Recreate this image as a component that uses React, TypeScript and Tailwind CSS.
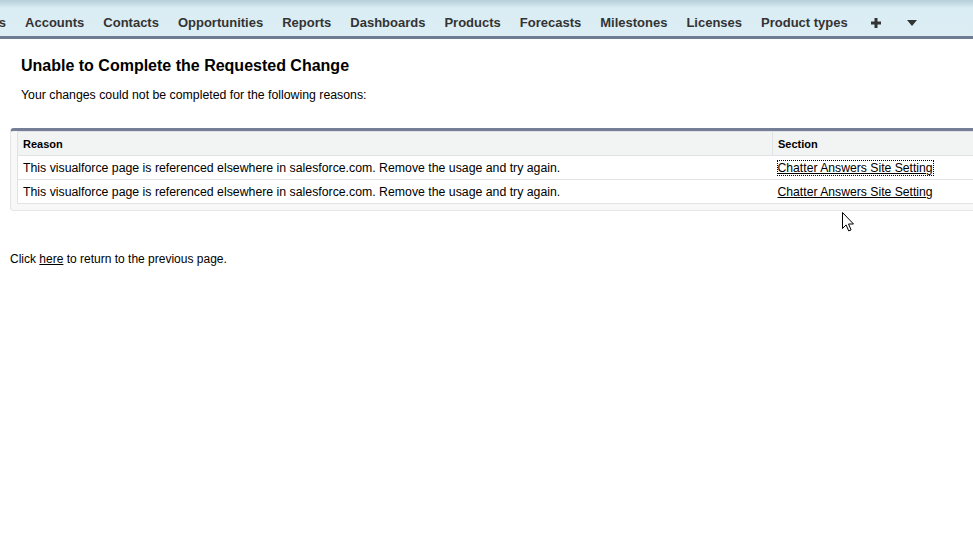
import React from 'react'

const TABS = ['Leads', 'Accounts', 'Contacts', 'Opportunities', 'Reports', 'Dashboards', 'Products', 'Forecasts', 'Milestones', 'Licenses', 'Product types']

const REASON = 'This visualforce page is referenced elsewhere in salesforce.com. Remove the usage and try again.'

export default function App() {
  return (
    <div className="relative min-h-[533px] overflow-hidden bg-white font-['Arial','Liberation_Sans',sans-serif] text-black">

      {/* Tab bar */}
      <div className="h-[39px] border-b-[3px] border-[#6d7b93] bg-[linear-gradient(to_bottom,#b6cfd8_0px,#c9e0e8_5px,#dbedf4_8px,#dcedf4_100%)]">
        <div className="flex h-full items-start pt-[15px] text-[13px] leading-4 font-bold text-[#333]">
          {TABS.map((t, i) => (
            <span key={t} className={i === 0 ? '-ml-[41px] px-[9.5px] whitespace-nowrap' : 'px-[9.5px] whitespace-nowrap'}>{t}</span>
          ))}
          <span className="ml-[14px] flex h-4 items-center">
            <svg width="10" height="10" viewBox="0 0 10 10">
              <path d="M5 0v10M0 5h10" stroke="#333" strokeWidth="3" />
            </svg>
          </span>
          <span className="ml-[26px] flex h-4 items-center">
            <svg width="10" height="6" viewBox="0 0 10 6">
              <path d="M0 0h10L5 6z" fill="#333" />
            </svg>
          </span>
        </div>
      </div>

      {/* Heading */}
      <div className="px-[21px] pt-[17px]">
        <h1 className="text-[16px] leading-5 font-bold">Unable to Complete the Requested Change</h1>
        <p className="mt-[12px] text-[12.3px] leading-[14px]">Your changes could not be completed for the following reasons:</p>
      </div>

      {/* Reasons block */}
      <div className="mt-[26px] ml-[10px] w-[1100px] rounded-[4px] border border-t-[3px] border-[#e3e5e7] border-t-[#747e96] bg-[#f8f8f8] pb-[6px] pl-[6px]">
        <table className="w-[1090px] border-collapse border border-[#e0e3e5] bg-white text-[12.3px]">
          <thead>
            <tr className="h-[24px] bg-[#f2f3f3]">
              <th className="w-[755px] border-r border-b border-[#e0e3e5] px-[5px] pt-px text-left text-[11px] font-bold">Reason</th>
              <th className="border-b border-[#e0e3e5] px-[5px] pt-px text-left text-[11px] font-bold">Section</th>
            </tr>
          </thead>
          <tbody>
            {[0, 1].map(i => (
              <tr key={i} className="h-[24px] border-b border-[#e3e3e3]">
                <td className="px-[5px] pt-px">{REASON}</td>
                <td className="px-[5px] pt-px text-[12.2px]">
                  <a href="#" className={i === 0 ? 'underline outline-1 outline-dotted outline-black' : 'underline'}>Chatter Answers Site Setting</a>
                </td>
              </tr>
            ))}
          </tbody>
        </table>
      </div>

      <p className="mt-[41px] pl-[10px] text-[12px] leading-[14px]">
        Click <a href="#" className="underline">here</a> to return to the previous page.
      </p>

      {/* mouse pointer */}
      <svg className="absolute left-[842px] top-[212px]" width="13" height="20" viewBox="0 0 13 20">
        <path d="M0.5 0.5v16l3.6-3.6 2.6 6 2.4-1-2.6-5.9h5z" fill="white" stroke="black" strokeWidth="1" strokeLinejoin="round" />
      </svg>
    </div>
  )
}
